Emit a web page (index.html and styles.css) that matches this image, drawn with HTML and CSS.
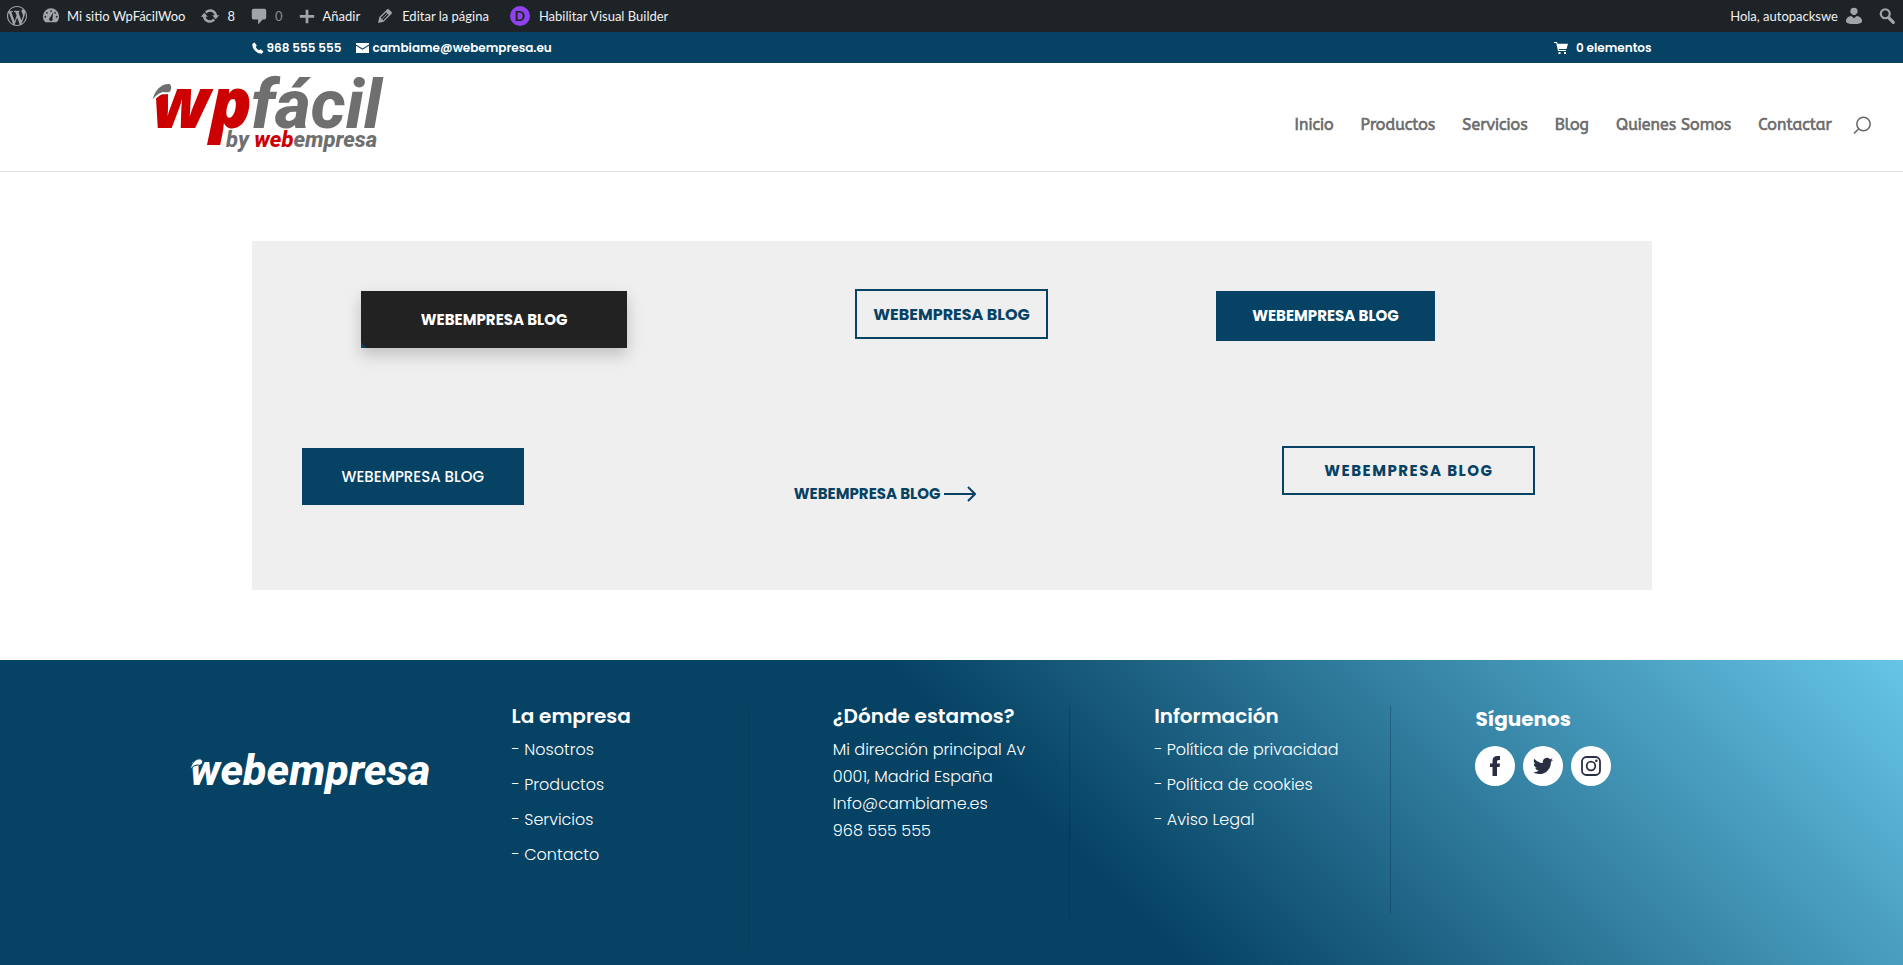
FILE: index.html
```html
<!DOCTYPE html>
<html lang="es">
<head>
<meta charset="utf-8">
<title>WpFácilWoo</title>
<link rel="stylesheet" href="styles.css">
</head>
<body>
<nav class="adminbar" aria-label="Administración">
  <div class="adminbar-group">
    <a class="admin-item" href="#" aria-label="WordPress"><svg class="ico20" viewBox="0 0 20 20"><path fill="currentColor" d="M20 10c0-5.51-4.49-10-10-10C4.48 0 0 4.49 0 10c0 5.52 4.48 10 10 10 5.51 0 10-4.48 10-10zM7.78 15.37L4.37 6.22c.55-.02 1.17-.08 1.17-.08.5-.06.44-1.13-.06-1.11 0 0-1.45.11-2.37.11-.18 0-.37 0-.58-.01C4.12 2.69 6.87 1.11 10 1.11c2.33 0 4.45.87 6.05 2.34-.68-.11-1.65.39-1.65 1.58 0 .74.45 1.36.9 2.1.35.61.55 1.36.55 2.46 0 1.49-1.4 5-1.4 5l-3.03-8.37c.54-.02.82-.17.82-.17.5-.05.44-1.25-.06-1.22 0 0-1.44.12-2.38.12-.87 0-2.33-.12-2.33-.12-.5-.03-.56 1.2-.06 1.22l.92.08 1.26 3.41zM17.41 10c.24-.64.74-1.87.43-4.25.7 1.29 1.05 2.71 1.05 4.25 0 3.29-1.73 6.24-4.4 7.78.97-2.59 1.94-5.2 2.92-7.78zM6.1 18.09C3.12 16.65 1.11 13.53 1.11 10c0-1.3.23-2.48.72-3.59C3.25 10.3 4.67 14.2 6.1 18.09zm4.03-6.63l2.58 6.98c-.86.29-1.76.45-2.71.45-.79 0-1.57-.11-2.29-.33.81-2.38 1.62-4.74 2.42-7.1z"/></svg></a>
    <a class="admin-item" href="#"><svg class="ico18" viewBox="0 0 20 20"><path fill="currentColor" d="M3.76 17h12.48A8.98 8.98 0 0 0 19 10.500a9 9 0 0 0-18 0A8.980 8.980 0 0 0 3.760 17z"/><g fill="#1d2327"><circle cx="10" cy="4.500" r="1"/><circle cx="5.500" cy="6.500" r="1"/><circle cx="14.500" cy="6.500" r="1"/><circle cx="3.700" cy="10.800" r="1"/><circle cx="16.300" cy="10.800" r="1"/><path d="M12.500 6L11.600 12.500a2 2 0 1 1-2.600-.7z"/></g></svg><span>Mi sitio WpFácilWoo</span></a>
    <a class="admin-item" href="#"><svg class="ico20" viewBox="0 0 20 20"><path fill="currentColor" d="M10.200 3.280c3.530 0 6.430 2.610 6.920 6H19.200l-3.500 4-3.500-4h2.320c-.45-1.970-2.210-3.450-4.320-3.450-1.450 0-2.730.71-3.540 1.780L4.950 5.660C6.230 4.200 8.110 3.280 10.200 3.280zm-.4 13.440c-3.520 0-6.430-2.610-6.920-6H.8l3.500-4c1.170 1.330 2.330 2.670 3.500 4H5.480c.45 1.970 2.210 3.450 4.320 3.450 1.450 0 2.730-.71 3.540-1.780l1.710 1.950c-1.280 1.460-3.150 2.380-5.250 2.380z"/></svg><span>8</span></a>
    <a class="admin-item muted" href="#"><svg class="ico18" viewBox="0 0 20 20"><path fill="currentColor" d="M4 2h12q2 0 2 2v8q0 2-2 2h-2l-5 5.500V14H4q-2 0-2-2V4q0-2 2-2z"/></svg><span>0</span></a>
    <a class="admin-item" href="#"><svg class="ico18" viewBox="0 0 20 20"><path fill="currentColor" d="M8.500 3h3v6H18v3h-6.500v6h-3v-6H2V9h6.500z"/></svg><span>Añadir</span></a>
    <a class="admin-item" href="#"><svg class="ico20" viewBox="0 0 20 20"><path fill="currentColor" d="M13.890 3.390l2.710 2.720c.46.46.42 1.240.03 1.640l-8.010 8.020-5.560 1.160 1.160-5.580s7.600-7.630 7.990-8.030c.39-.39 1.220-.39 1.680.07zm-2.730 2.790l-5.590 5.610 1.110 1.110 5.540-5.650zm-2.970 8.230l5.580-5.600-1.070-1.080-5.590 5.600z"/></svg><span>Editar la página</span></a>
    <a class="admin-item builder" href="#"><span class="divi">D</span><span>Habilitar Visual Builder</span></a>
  </div>
  <div class="adminbar-group">
    <a class="admin-item" href="#"><span>Hola, autopackswe</span><svg class="ico18" viewBox="0 0 20 20"><path fill="currentColor" d="M10 1a3.600 3.800 0 0 1 2 7.200q-2 1.600-4 0A3.600 3.800 0 0 1 10 1zM7 10l3 2.500L13 10q5.500.6 6 5.500 0 3.500-9 3.500t-9-3.500Q1.500 10.600 7 10z"/></svg></a>
    <button class="admin-item" type="button" aria-label="Buscar"><svg class="ico18" viewBox="0 0 20 20"><path fill="none" stroke="currentColor" stroke-width="2.400" d="M8 2.500a5 5 0 1 0 .1 0z"/><path stroke="currentColor" stroke-width="3.600" stroke-linecap="round" d="M12.500 12.500l4.500 4.500"/></svg></button>
  </div>
</nav>

<div class="topbar">
  <div class="wrap topbar-row">
    <div class="topbar-info">
      <span class="contact"><svg class="ico12" viewBox="0 0 12 12"><path fill="#fff" d="M2.500.5L4.800 3.500 3.700 5Q4.800 7.300 7 8.300l1.500-1.100L11.500 9.500 9.800 11.800Q6 12 2.800 8.500-.3 5 .5 1.800z"/></svg>968 555 555</span>
      <a class="contact" href="#"><svg class="ico14" viewBox="0 0 14 14"><path fill="#fff" d="M0 2h13v1.500L6.500 7.500 0 3.500zM0 4.800l6.500 4 6.500-4V12H0z"/></svg>cambiame@webempresa.eu</a>
    </div>
    <a class="cart" href="#"><svg class="ico14" viewBox="0 0 14 14"><path fill="#fff" d="M0 1h3l.5 1.700H14L12.500 8H4.700l.3 1H12v1H4L2.200 2H0zM4.500 11h2v2h-2zM10 11h2v2h-2z"/></svg>0 elementos</a>
  </div>
</div>

<header class="header">
  <a class="logo" href="#" aria-label="wpfácil by webempresa">
    <svg width="236" height="92" viewBox="0 0 236 92">
      <g class="logo-type">
        <text class="logo-wide" x="0" y="64" font-size="70" fill="#c00">wp</text>
        <text x="99" y="64" font-size="69" fill="#6f6f6f">fácil</text>
        <text x="74" y="83" font-size="22" fill="#6f6f6f">by <tspan fill="#c00">web</tspan>empresa</text>
      </g>
      <path fill="#6f6f6f" stroke="#fff" stroke-width="2" d="M-1 40C0 25 10 18 18 19q4 3 1 9-3 2-8 1Q4 31-1 40z"/>
    </svg>
  </a>
  <nav class="menu" aria-label="Principal">
    <a href="#">Inicio</a><a href="#">Productos</a><a href="#">Servicios</a><a href="#">Blog</a><a href="#">Quienes Somos</a><a href="#">Contactar</a>
    <button class="search" type="button" aria-label="Buscar"><svg class="ico18" viewBox="0 0 18 18"><g fill="none" stroke="#666" stroke-width="1.500"><circle cx="10.500" cy="8" r="6.700"/><path d="M6 12.500L1 17.500"/></g></svg></button>
  </nav>
</header>

<main class="main">
  <section class="panel wrap">
    <div class="cell center"><a class="btn dark" href="#">WEBEMPRESA BLOG</a></div>
    <div class="cell center"><a class="btn outline" href="#">WEBEMPRESA BLOG</a></div>
    <div class="cell"><a class="btn blue" href="#">WEBEMPRESA BLOG</a></div>
    <div class="cell"><a class="btn blue tall" href="#">WEBEMPRESA BLOG</a></div>
    <div class="cell"><a class="arrow-link" href="#">WEBEMPRESA BLOG<svg width="32" height="16" viewBox="0 0 32 16"><path fill="none" stroke="#064263" stroke-width="2" d="M0 8h31M24 1l7 7-7 7"/></svg></a></div>
    <div class="cell center"><a class="btn outline spaced" href="#">WEBEMPRESA BLOG</a></div>
  </section>
</main>

<footer class="footer">
  <div class="footer-grid">
    <div class="brand">
      <svg width="240" height="56" viewBox="0 0 240 56" role="img" aria-label="webempresa">
        <text class="logo-type" x="0" y="39" font-size="43" fill="#fff">webempresa</text>
        <path fill="#fff" stroke="#064263" stroke-width="1" d="M0 24C1 17 6 12 11 13q3 2 1 5-2 2-5 1-4 0-7 5z"/>
      </svg>
    </div>
    <div class="widget ruled">
      <h2>La empresa</h2>
      <ul><li><a href="#">- Nosotros</a></li><li><a href="#">- Productos</a></li><li><a href="#">- Servicios</a></li><li><a href="#">- Contacto</a></li></ul>
    </div>
    <div class="widget ruled">
      <h2>¿Dónde estamos?</h2>
      <p>Mi dirección principal Av<br>0001, Madrid España<br>Info@cambiame.es<br>968 555 555</p>
    </div>
    <div class="widget ruled">
      <h2>Información</h2>
      <ul><li><a href="#">- Política de privacidad</a></li><li><a href="#">- Política de cookies</a></li><li><a href="#">- Aviso Legal</a></li></ul>
    </div>
    <div class="widget follow">
      <h2>Síguenos</h2>
      <div class="social">
        <a href="#" aria-label="Facebook"><svg viewBox="0 0 20 20"><path fill="#2a2e43" d="M7.500 20v-9H5V7.500h2.500V5q0-5 5-5H15v4h-1.500Q12 4 12 5.500v2h3l-.4 3.500H12v9z"/></svg></a>
        <a href="#" aria-label="Twitter"><svg viewBox="0 0 24 24"><path fill="#2a2e43" d="M24 4.600a10 10 0 0 1-2.800.8 5 5 0 0 0 2.200-2.700c-1 .6-2 1-3.100 1.200a4.900 4.900 0 0 0-8.400 4.500C7.700 8.200 4.100 6.200 1.700 3.200a4.900 4.900 0 0 0 1.500 6.500 5 5 0 0 1-2.200-.6 4.900 4.900 0 0 0 3.900 4.900 5 5 0 0 1-2.200.1 4.900 4.900 0 0 0 4.600 3.400A9.900 9.900 0 0 1 0 19.500a14 14 0 0 0 7.500 2.200c9.100 0 14-7.500 14-14v-.6A10 10 0 0 0 24 4.600z"/></svg></a>
        <a href="#" aria-label="Instagram"><svg viewBox="0 0 20 20"><g fill="none" stroke="#2a2e43" stroke-width="1.800"><rect x="1" y="1" width="18" height="18" rx="4.500"/><circle cx="10" cy="10" r="4.300"/></g><circle cx="15.300" cy="4.700" r="1.300" fill="#2a2e43"/></svg></a>
      </div>
    </div>
  </div>
</footer>
</body>
</html>
```
FILE: styles.css
```css
* { box-sizing: border-box; }
body {
  margin: 0;
  min-height: 100vh;
  display: flex;
  flex-direction: column;
  background: #fff;
  font-family: Poppins, Inter, sans-serif;
  font-size: 16px;
}
a { color: inherit; text-decoration: none; }
button { padding: 0; border: 0; background: none; font: inherit; color: inherit; }
svg { display: block; flex: none; }
h2, p, ul { margin: 0; padding: 0; }
ul { list-style: none; }
.ico12 { width: 12px; height: 12px; }
.ico14 { width: 14px; height: 14px; }
.ico18 { width: 18px; height: 18px; }
.ico20 { width: 20px; height: 20px; }
.wrap { width: 80%; max-width: 1400px; margin: 0 auto; }

.adminbar {
  display: flex;
  justify-content: space-between;
  height: 32px;
  padding: 0 7px;
  background: #1d2327;
  color: #f0f0f1;
  font: 13px/32px Lato, sans-serif;
}
.adminbar-group { display: flex; gap: 15px; }
.admin-item { display: flex; align-items: center; gap: 7px; }
.admin-item svg { color: #a0a5aa; }
.muted { color: #888c90; }
.builder { margin-left: 6px; gap: 9px; }
.divi {
  width: 20px;
  height: 20px;
  border-radius: 50%;
  background: #8f42ec;
  color: #1d2327;
  font: bold 14px/20px Lato, sans-serif;
  text-align: center;
}

.topbar { background: #064263; color: #fff; font-size: 12px; font-weight: 600; }
.topbar-row { display: flex; justify-content: space-between; line-height: 31px; }
.topbar-info { display: flex; gap: 14px; }
.contact, .cart { display: flex; align-items: center; gap: 3px; }
.cart { gap: 8px; }

.header {
  display: flex;
  justify-content: space-between;
  align-items: flex-start;
  height: 109px;
  padding: 0 32px 0 8%;
  border-bottom: 1px solid #e2e2e2;
}
.logo { padding-top: 1px; }
.logo svg { overflow: visible; }
.logo-type { font-family: Roboto, sans-serif; font-weight: 800; font-style: italic; }
.logo-wide { font-family: "Open Sans", sans-serif; }
.menu {
  display: flex;
  align-items: center;
  gap: 27px;
  padding-top: 50px;
  color: #707070;
  font: 700 16px/24px ABeeZee, "Open Sans", sans-serif;
}
.search { margin-left: -6px; }

.main { padding: 69px 0 70px; }
.panel {
  display: grid;
  grid-template-columns: repeat(3, 1fr);
  grid-template-rows: 157px 96px;
  column-gap: 72px;
  padding: 48px 50px;
  background: #efefef;
  color: #064263;
}
.cell { display: flex; align-items: flex-start; }
.center { justify-content: center; }
.btn {
  padding: 0 36px;
  font-size: 15px;
  font-weight: 700;
  line-height: 50px;
  text-align: center;
}
.dark, .blue { margin-top: 2px; color: #fff; }
.dark {
  padding: 0 60px;
  line-height: 57px;
  background: linear-gradient(45deg, #064263 4px, #222 4px);
  box-shadow: 0 7px 15px rgba(0, 0, 0, .2);
}
.blue { background: #064263; }
.tall { padding: 0 40px; line-height: 57px; font-weight: 500; }
.outline { padding: 2px 16px 0; border: 2px solid #064263; font-size: 16px; line-height: 44px; }
.spaced { padding: 0 40px; font-size: 15px; letter-spacing: 0.1em; line-height: 45px; }
.arrow-link {
  display: flex;
  align-items: center;
  gap: 4px;
  padding: 36px 0 0 35px;
  font-size: 15px;
  font-weight: 700;
  line-height: 24px;
}

.footer {
  flex: 1 0 auto;
  color: #fff;
  background: linear-gradient(45deg, #064263 54%, #66c5e7);
}
.footer-grid {
  display: grid;
  grid-template-columns: repeat(5, minmax(0, 1fr));
  align-items: start;
  gap: 84px;
  width: 80%;
  margin: 0 auto;
  padding: 46px 0 17px;
}
.brand { padding-top: 40px; }
.widget { font-weight: 300; line-height: 27px; }
.widget h2 { padding-bottom: 10px; font-size: 20px; font-weight: 600; line-height: 20px; }
.widget li { margin-bottom: 8px; }
.ruled { padding-bottom: 73px; border-right: 1px solid rgba(0, 40, 70, .3); }
.widget.follow { padding-top: 3px; }
.widget.follow h2 { padding-bottom: 17px; font-weight: 700; }
.social { display: flex; gap: 8px; }
.social a {
  display: grid;
  place-items: center;
  width: 40px;
  height: 40px;
  border-radius: 50%;
  background: #fff;
}
.social svg { width: 20px; height: 20px; }
```
